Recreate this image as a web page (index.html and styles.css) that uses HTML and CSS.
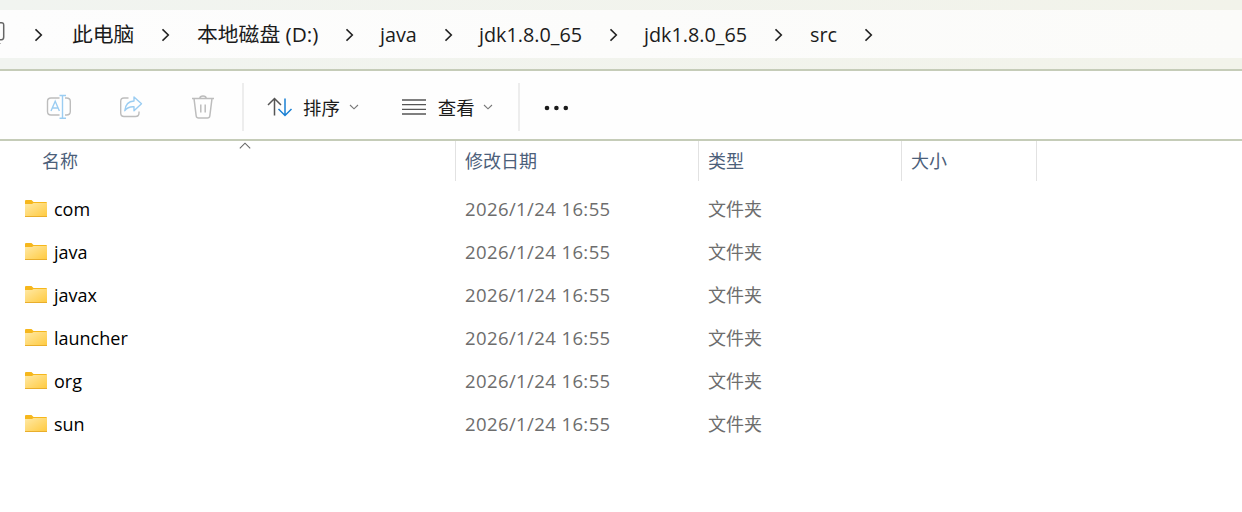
FILE: index.html
```
<!DOCTYPE html>
<html lang="zh-CN">
<head>
  <meta charset="UTF-8" />
  <title>src</title>
  <meta name="viewport" content="width=device-width, initial-scale=1" />
  <link rel="stylesheet" href="styles.css">
</head>
<body>

<svg class="defs" width="0" height="0">
  <defs>
    <linearGradient id="folder-fill" x1="0" y1="0" x2="1" y2="1">
      <stop offset="0" stop-color="#ffe9a6" />
      <stop offset="1" stop-color="#ffca3f" />
    </linearGradient>
    <symbol id="chevron" viewBox="0 0 8 14">
      <path d="M.5 1.3L6.3 7L.5 12.7" fill="none" stroke="#222" stroke-width="1.6" />
    </symbol>
    <symbol id="down" viewBox="0 0 10 6">
      <path d="M1 1L5 4.8L9 1" fill="none" stroke="#777" stroke-width="1.1" />
    </symbol>
    <symbol id="folder" viewBox="0 0 22 18">
      <path d="M0 2Q0 1 1 1H6.5L8.5 3H21Q22 3 22 4V8H0Z" fill="#f6b71c" />
      <path d="M0 5H7L8.5 4H22V17.5H0Z" fill="url(#folder-fill)" />
      <path d="M0 17.5H22" stroke="#e9ae2c" stroke-width="1" />
    </symbol>
  </defs>
</svg>

<header class="address">
  <nav class="crumbs">
    <svg class="monitor" width="35" height="26" viewBox="0 0 35 26"><path d="M0 1.7H1.5Q3.7 1.7 3.7 4V16Q3.7 18.7 1.5 18.7H0" fill="none" stroke="#666" stroke-width="1.5" /><path d="M0 22.5H1" stroke="#bbb" /></svg>
    <svg class="sep" width="8" height="14"><use href="#chevron" /></svg>
    <span class="zh">此电脑</span>
    <svg class="sep" width="8" height="14"><use href="#chevron" /></svg>
    <span class="zh">本地磁盘 (D:)</span>
    <svg class="sep" width="8" height="14"><use href="#chevron" /></svg>
    <span>java</span>
    <svg class="sep" width="8" height="14"><use href="#chevron" /></svg>
    <span>jdk1.8.0_65</span>
    <svg class="sep" width="8" height="14"><use href="#chevron" /></svg>
    <span>jdk1.8.0_65</span>
    <svg class="sep" width="8" height="14"><use href="#chevron" /></svg>
    <span>src</span>
    <svg class="sep" width="8" height="14"><use href="#chevron" /></svg>
  </nav>
</header>

<div class="toolbar">
  <div class="actions">
    <!-- rename -->
    <svg width="26" height="26" viewBox="0 0 26 26" fill="none" stroke-width="1.4">
      <path d="M13.5 4H5Q1.5 4 1.5 7.5V17.5Q1.5 21 5 21H13.5M19 4H20.5Q24.3 4 24.3 7.5V17.5Q24.3 21 20.5 21H19" stroke="#bdbdbd" />
      <path d="M5 17L9.2 7.3L13.4 17M6.4 14H12M13.5 1.5H20M13.5 24.3H20M16.5 1.5V24.3" stroke="#9bcdf2" />
    </svg>
    <!-- share -->
    <svg width="26" height="26" viewBox="0 0 26 26" fill="none" stroke-width="1.4" stroke-linejoin="round">
      <path d="M10.5 4H6Q2.7 4 2.7 7.5V19Q2.7 22.5 6 22.5H17.5Q21 22.5 21 19V17.5" stroke="#bdbdbd" />
      <path d="M16 3L23.5 9.8L16 16.8V12.8Q10 12.4 6.8 16.7Q7.7 7.4 16 7Z" stroke="#9bcdf2" />
    </svg>
    <!-- delete -->
    <svg width="26" height="26" viewBox="0 0 26 26" fill="none" stroke="#bdbdbd" stroke-width="1.5">
      <path d="M2 4.5H24M9.7 4.5Q10 2 13 2T16.3 4.5M4 4.5L6.2 22Q6.5 24 8.5 24H17.5Q19.5 24 19.8 22L22 4.5M10.8 10.5V18.5M15.2 10.5V18.5" />
    </svg>
  </div>
  <div class="menus">
    <div class="menu">
      <svg width="26" height="20" viewBox="0 0 26 20" fill="none" stroke-width="1.5">
        <path d="M7.5 18.5V1.5M1 8L7.5 1.5L14 8" stroke="#555" />
        <path d="M18 1.5V18.5M11.5 12L18 18.5L24.5 12" stroke="#1a80d4" />
      </svg>
      <span>排序</span>
      <svg width="10" height="6"><use href="#down" /></svg>
    </div>
    <div class="menu view">
      <svg width="24" height="16" viewBox="0 0 24 16"><path d="M0 1H24M0 5.6H24M0 10.4H24M0 15H24" stroke="#555" stroke-width="1.3" /></svg>
      <span>查看</span>
      <svg width="10" height="6"><use href="#down" /></svg>
    </div>
  </div>
  <svg class="more" width="26" height="6" viewBox="0 0 26 6" fill="#1b1b1b"><circle cx="3" cy="3" r="2.3" /><circle cx="12.4" cy="3" r="2.3" /><circle cx="21.8" cy="3" r="2.3" /></svg>
</div>

<main class="files">
  <div class="row head">
    <div class="name">名称<svg class="sort" width="12" height="7" viewBox="0 0 12 7"><path d="M.8 6.3L6 1.2L11.2 6.3" fill="none" stroke="#666" stroke-width="1.1" /></svg></div>
    <div>修改日期</div>
    <div>类型</div>
    <div>大小</div>
  </div>
  <div class="row">
    <div class="name"><svg width="22" height="18"><use href="#folder" /></svg>com</div>
    <div class="date">2026/1/24 16:55</div>
    <div>文件夹</div>
  </div>
  <div class="row">
    <div class="name"><svg width="22" height="18"><use href="#folder" /></svg>java</div>
    <div class="date">2026/1/24 16:55</div>
    <div>文件夹</div>
  </div>
  <div class="row">
    <div class="name"><svg width="22" height="18"><use href="#folder" /></svg>javax</div>
    <div class="date">2026/1/24 16:55</div>
    <div>文件夹</div>
  </div>
  <div class="row">
    <div class="name"><svg width="22" height="18"><use href="#folder" /></svg>launcher</div>
    <div class="date">2026/1/24 16:55</div>
    <div>文件夹</div>
  </div>
  <div class="row">
    <div class="name"><svg width="22" height="18"><use href="#folder" /></svg>org</div>
    <div class="date">2026/1/24 16:55</div>
    <div>文件夹</div>
  </div>
  <div class="row">
    <div class="name"><svg width="22" height="18"><use href="#folder" /></svg>sun</div>
    <div class="date">2026/1/24 16:55</div>
    <div>文件夹</div>
  </div>
</main>

</body>
</html>
```
FILE: styles.css
```
* { box-sizing: border-box; }
body { margin: 0; height: 512px; overflow: hidden; background: #fff; font-family: "Open Sans", "Noto Sans CJK SC", sans-serif; font-size: 18px; font-weight: 400; color: #000; }
svg { display: block; flex: none; }
.defs { position: absolute; }

.address { height: 71px; padding: 10px 0 11px; background: linear-gradient(90deg, #f1f4f0, #f2f3ea); border-bottom: 2px solid #c5ccb8; }
.crumbs { display: grid; grid-template-columns: 35px 37px 90px 35px 149px 34px 65px 34px 131px 34px 131px 35px 55px 35px; align-items: center; height: 48px; background: linear-gradient(90deg, #fdfdfd, #fbfbf9); font-size: 19.8px; color: #1b1b1b; white-space: nowrap; line-height: 46px; }
.crumbs span { padding-top: 2px; }
.crumbs .zh { font-size: 20.8px; padding-top: 0; }
.sep { margin-top: 1px; }
.monitor { margin-top: -1px; }

.toolbar { display: flex; align-items: center; height: 70px; padding-top: 4px; background: #fefefe; border-bottom: 2px solid #c5ccb8; }
.actions { display: flex; gap: 46px; width: 244px; height: 48px; padding-left: 46px; align-items: center; border-right: 2px solid #ededed; }
.menus { display: flex; width: 276px; height: 48px; padding-left: 23px; align-items: center; border-right: 2px solid #ededed; }
.menu { display: flex; align-items: center; gap: 10px; color: #1b1b1b; }
.menu span { margin-right: -1px; font-size: 18.4px; }
.view { margin-left: 43px; gap: 12px; }
.view span { margin-right: -4px; }
.more { margin-left: 24px; margin-top: 1px; }

.row { display: grid; grid-template-columns: 456px 243px 203px 135px; align-items: center; height: 43px; color: #6d6d6d; white-space: nowrap; line-height: 43px; }
.row > div { padding: 1px 0 0 9px; }
.row > .name { display: flex; align-items: center; gap: 7px; padding-left: 25px; color: #000; }
.name > svg { margin-top: -4px; }
.head { height: 40px; margin-bottom: 6px; color: #4c607a; line-height: 40px; }
.head > div { height: 40px; padding-top: 0; border-right: 1px solid #e2e2e2; }
.head > .name { position: relative; padding-left: 42px; color: #4c607a; }
.name > .sort { position: absolute; left: 238.5px; top: 1px; margin: 0; }
.row > .date { padding-top: 0; margin-top: -1px; font-size: 18.5px; letter-spacing: .4px; }
```
